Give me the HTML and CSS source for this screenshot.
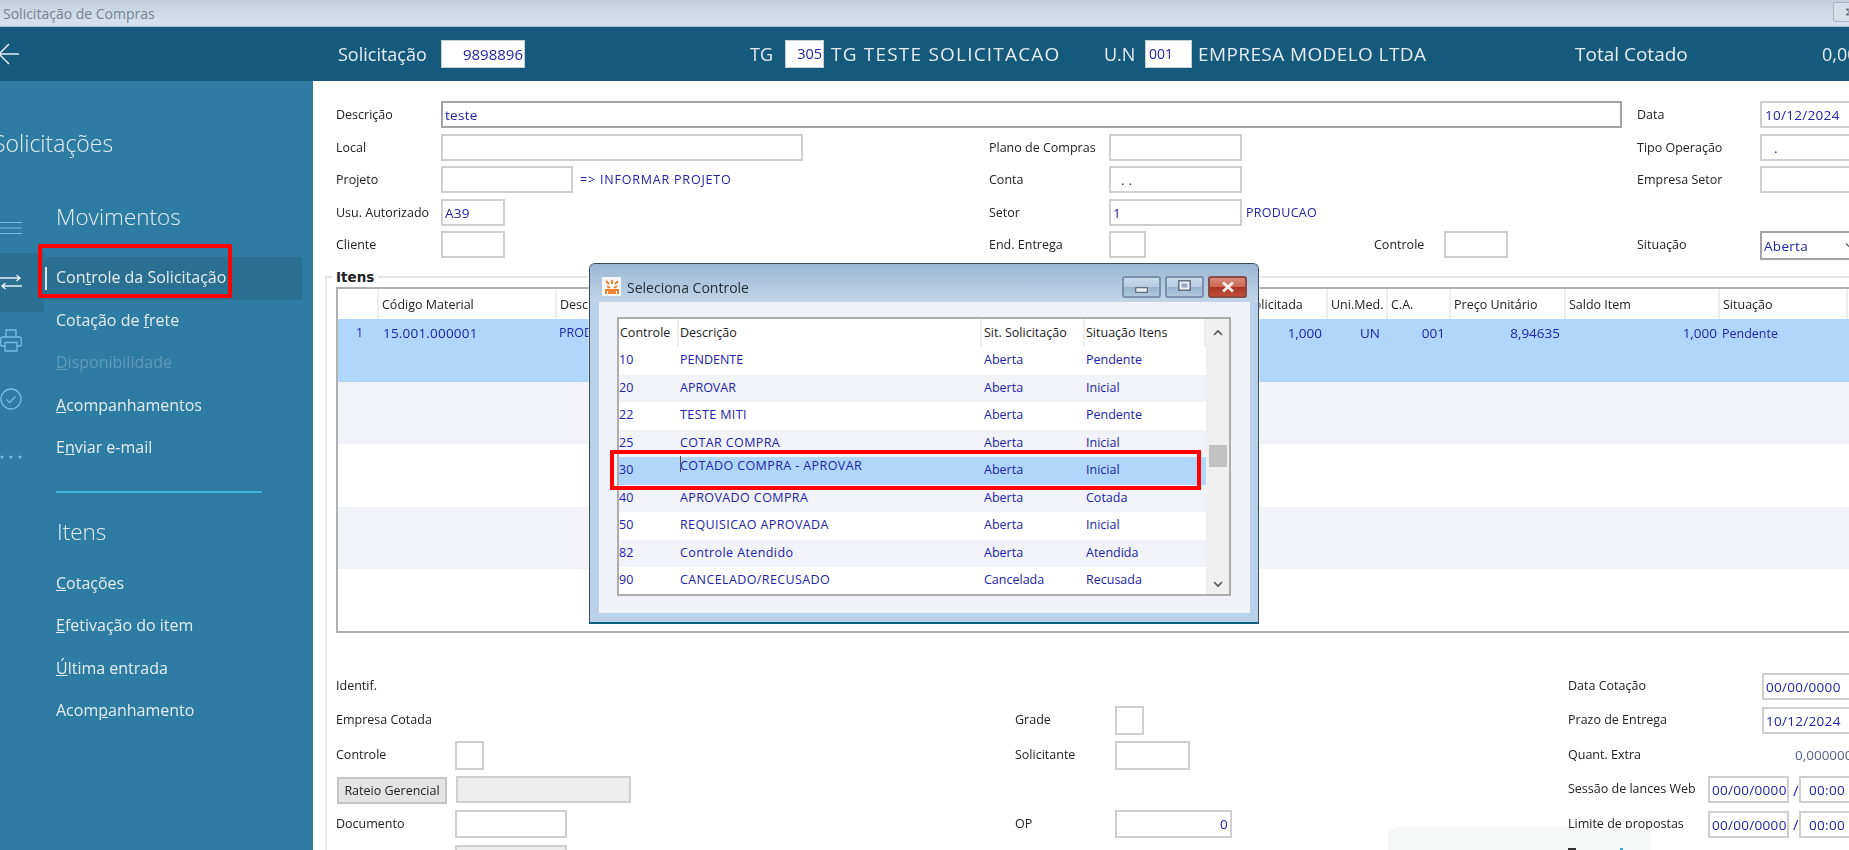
FILE: index.html
```html
<!DOCTYPE html>
<html lang="pt-BR">
<head>
<meta charset="utf-8">
<title>Solicitação de Compras</title>
<link rel="stylesheet" href="styles.css">
</head>
<body>
<div class="app">
  <div class="titlebar">
    <span class="titlebar-text">Solicitação de Compras</span>
    <span class="titlebar-btn">
      <svg width="14" height="14" viewBox="0 0 14 14"><path d="M3 3h9M3 3l5 4-5 4h9" fill="none" stroke="#556" stroke-width="1.4"/></svg>
    </span>
  </div>
  <header class="topbar">
    <svg class="back" width="20" height="30" viewBox="0 0 20 30"><path d="M19 15H0M9 5L-1 15L9 25" fill="none" stroke="#e4edf2" stroke-width="1.5"/></svg>
    <span class="tb-label tb-sol">Solicitação</span>
    <span class="tb-box tb-box-sol">9898896</span>
    <span class="tb-label tb-tg">TG</span>
    <span class="tb-box tb-box-tg">305</span>
    <span class="tb-label tb-tgname">TG TESTE SOLICITACAO</span>
    <span class="tb-label tb-un">U.N</span>
    <span class="tb-box tb-box-un">001</span>
    <span class="tb-label tb-unname">EMPRESA MODELO LTDA</span>
    <span class="tb-label tb-total">Total Cotado</span>
    <span class="tb-label tb-value">0,00</span>
  </header>
  <div class="body">
    <aside class="sidebar">
      <div class="side-title">Solicitações</div>
      <div class="side-main">
        <div class="rail">
          <div class="rail-cell rail-first">
            <svg width="22" height="14" viewBox="0 0 22 14"><path d="M0 1.500h22M0 7h22M0 12.500h22" stroke="#74bde6" stroke-width="1.200"/></svg>
          </div>
          <div class="rail-cell rail-active">
            <svg width="22" height="16" viewBox="0 0 22 16"><path d="M0 4h20M16.500 1l3.500 3-3.500 3M22 12H2M5.500 9L2 12l3.500 3" fill="none" stroke="#e8f1f6" stroke-width="1.400"/></svg>
          </div>
          <div class="rail-cell">
            <svg width="22" height="23" viewBox="0 0 22 23"><path d="M6 8V1h10v7M5 17H1.500A1 1 0 0 1 .700 16v-6q0-2 2-2h16.600q2 0 2 2v6a1 1 0 0 1-.8 1H17M5 13.500h12V22H5z" fill="none" stroke="#74bde6" stroke-width="1.300"/></svg>
          </div>
          <div class="rail-cell">
            <svg width="22" height="22" viewBox="0 0 22 22"><circle cx="11" cy="11" r="10" fill="none" stroke="#74bde6" stroke-width="1.300"/><path d="M6.500 11.500l3 3 6-6" fill="none" stroke="#74bde6" stroke-width="1.300"/></svg>
          </div>
          <div class="rail-cell">
            <svg width="22" height="4" viewBox="0 0 22 4"><circle cx="2" cy="2" r="1.500" fill="#74bde6"/><circle cx="11" cy="2" r="1.500" fill="#74bde6"/><circle cx="20" cy="2" r="1.500" fill="#74bde6"/></svg>
          </div>
        </div>
        <nav class="nav">
          <div class="nav-heading">Movimentos</div>
          <ul class="nav-list">
            <li class="nav-item nav-active">Con<u>t</u>role da Solicitação</li>
            <li class="nav-item">Cotação de <u>f</u>rete</li>
            <li class="nav-item nav-disabled"><u>D</u>isponibilidade</li>
            <li class="nav-item"><u>A</u>companhamentos</li>
            <li class="nav-item">E<u>n</u>viar e-mail</li>
          </ul>
          <div class="nav-divider"></div>
          <div class="nav-heading nav-heading-2">Itens</div>
          <ul class="nav-list nav-list-2">
            <li class="nav-item"><u>C</u>otações</li>
            <li class="nav-item"><u>E</u>fetivação do item</li>
            <li class="nav-item"><u>Ú</u>ltima entrada</li>
            <li class="nav-item">Acom<u>p</u>anhamento</li>
          </ul>
        </nav>
      </div>
    </aside>
    <main class="main">
      <section class="top-form">
        <label class="lbl">Descrição</label>
        <div class="fld fld-dark span-desc val">teste</div>
        <label class="lbl col6">Data</label>
        <div class="fld fld-open val pad-date">10/12/2024</div>

        <label class="lbl">Local</label>
        <div class="fld w362"></div>
        <label class="lbl">Plano de Compras</label>
        <div class="fld w133"></div>
        <span></span><span></span>
        <label class="lbl">Tipo Operação</label>
        <div class="fld fld-open val pad-dot">.</div>

        <label class="lbl">Projeto</label>
        <div class="cell-inline"><div class="fld w132"></div><span class="link link-wide">=&gt; INFORMAR PROJETO</span></div>
        <label class="lbl">Conta</label>
        <div class="fld w133 val pad-dots">. .</div>
        <span></span><span></span>
        <label class="lbl">Empresa Setor</label>
        <div class="fld fld-open"></div>

        <label class="lbl">Usu. Autorizado</label>
        <div class="fld w64 val">A39</div>
        <label class="lbl">Setor</label>
        <div class="cell-inline"><div class="fld w133 val">1</div><span class="link link-prod">PRODUCAO</span></div>
        <span></span><span></span><span></span><span></span>

        <label class="lbl">Cliente</label>
        <div class="fld w64"></div>
        <label class="lbl">End. Entrega</label>
        <div class="fld w37"></div>
        <label class="lbl">Controle</label>
        <div class="fld w64"></div>
        <label class="lbl">Situação</label>
        <div class="fld fld-dark fld-open fld-select val">Aberta
          <svg width="12" height="8" viewBox="0 0 12 8"><path d="M1 1.500l5 5 5-5" fill="none" stroke="#555" stroke-width="1.200"/></svg>
        </div>
      </section>

      <section class="group">
        <div class="group-title">Itens</div>
        <div class="grid-wrap">
          <table class="items">
            <colgroup>
              <col class="c1"><col class="c2"><col class="c3"><col class="c4"><col class="c5"><col class="c6"><col class="c7"><col class="c8"><col class="c9"><col class="c10">
            </colgroup>
            <thead>
              <tr><th></th><th>Código Material</th><th>Descrição</th><th>Quant. Solicitada</th><th>Uni.Med.</th><th>C.A.</th><th>Preço Unitário</th><th>Saldo Item</th><th>Situação</th><th></th></tr>
            </thead>
            <tbody>
              <tr class="sel"><td class="num-c">1</td><td class="ind">15.001.000001</td><td>PRODUTO</td><td class="r">1,000</td><td class="r r-un">UN</td><td class="r">001</td><td class="r">8,94635</td><td class="r r-saldo">1,000</td><td class="pend">Pendente</td><td></td></tr>
              <tr class="alt"><td colspan="10"></td></tr>
              <tr><td colspan="10"></td></tr>
              <tr class="alt"><td colspan="10"></td></tr>
              <tr><td colspan="10"></td></tr>
            </tbody>
          </table>
        </div>
      </section>

      <section class="bottom-form">
        <div class="bf-col bf-a">
          <div class="bf-row"><label class="lbl">Identif.</label></div>
          <div class="bf-row"><label class="lbl">Empresa Cotada</label></div>
          <div class="bf-row"><label class="lbl lbl-119">Controle</label><div class="fld w29"></div></div>
          <div class="bf-row"><button class="btn" type="button">Rateio Gerencial</button><div class="fld fld-off w175"></div></div>
          <div class="bf-row"><label class="lbl lbl-119">Documento</label><div class="fld w112"></div></div>
          <div class="bf-row"><span class="lbl-119"></span><div class="fld fld-off w112"></div></div>
        </div>
        <div class="bf-col bf-b">
          <div class="bf-row"></div>
          <div class="bf-row"><label class="lbl lbl-100">Grade</label><div class="fld w29"></div></div>
          <div class="bf-row"><label class="lbl lbl-100">Solicitante</label><div class="fld w75"></div></div>
          <div class="bf-row"></div>
          <div class="bf-row"><label class="lbl lbl-100">OP</label><div class="fld w117 val right">0</div></div>
        </div>
        <div class="bf-col bf-c">
          <div class="bf-row"><label class="lbl lbl-194">Data Cotação</label><div class="fld fld-open val">00/00/0000</div></div>
          <div class="bf-row"><label class="lbl lbl-194">Prazo de Entrega</label><div class="fld fld-open val">10/12/2024</div></div>
          <div class="bf-row"><label class="lbl lbl-194">Quant. Extra</label><span class="plain">0,000000</span></div>
          <div class="bf-row"><label class="lbl lbl-140">Sessão de lances Web</label><div class="fld w81 val">00/00/0000</div><span class="slash">/</span><div class="fld fld-open val ctr-time">00:00</div></div>
          <div class="bf-row"><label class="lbl lbl-140">Limite de propostas</label><div class="fld w81 val">00/00/0000</div><span class="slash">/</span><div class="fld fld-open val ctr-time">00:00</div></div>
        </div>
      </section>
    </main>
  </div>

  <div class="mark mark-side"></div>

  <div class="dialog">
    <div class="dlg-head">
      <span class="dlg-icon">
        <svg width="14" height="16" viewBox="0 0 14 16"><path d="M1 2l3 3M7 1v4M13 2l-3 3M2 7l3 2M12 7L9 9M1 15v-4h3v4M6 15v-4h2v4M10 15v-4h3v4" fill="none" stroke="#ef7a22" stroke-width="1.800"/></svg>
      </span>
      <span class="dlg-title">Seleciona Controle</span>
      <span class="win-btns">
        <span class="win-btn"><svg class="glyph-min" width="13" height="6" viewBox="0 0 13 6"><rect x=".7" y=".7" width="11.600" height="4.600" fill="#eef2f6" stroke="#5b6a80" stroke-width="1.200"/></svg></span>
        <span class="win-btn"><svg class="glyph-max" width="13" height="11" viewBox="0 0 13 11"><rect x=".8" y=".8" width="11.400" height="9.400" fill="#eef2f6" stroke="#5b6a80" stroke-width="1.400"/><rect x="3.500" y="3.500" width="6" height="4" fill="#8fa9c6"/></svg></span>
        <span class="win-btn win-close"><svg width="14" height="12" viewBox="0 0 14 12"><path d="M2 1.500l10 9M12 1.500l-10 9" stroke="#f3ecea" stroke-width="3"/></svg></span>
      </span>
    </div>
    <div class="dlg-body">
      <div class="list">
        <div class="list-main">
          <div class="list-row list-head"><span>Controle</span><span>Descrição</span><span>Sit. Solicitação</span><span>Situação Itens</span></div>
          <div class="list-row"><span>10</span><span>PENDENTE</span><span>Aberta</span><span>Pendente</span></div>
          <div class="list-row alt"><span>20</span><span>APROVAR</span><span>Aberta</span><span>Inicial</span></div>
          <div class="list-row"><span>22</span><span class="cap">TESTE MITI</span><span>Aberta</span><span>Pendente</span></div>
          <div class="list-row alt"><span>25</span><span class="cap">COTAR COMPRA</span><span>Aberta</span><span>Inicial</span></div>
          <div class="list-row sel"><span>30</span><span class="cap raised">COTADO COMPRA - APROVAR</span><span>Aberta</span><span>Inicial</span></div>
          <div class="list-row alt"><span>40</span><span class="cap">APROVADO COMPRA</span><span>Aberta</span><span>Cotada</span></div>
          <div class="list-row"><span>50</span><span class="cap">REQUISICAO APROVADA</span><span>Aberta</span><span>Inicial</span></div>
          <div class="list-row alt"><span>82</span><span class="cap">Controle Atendido</span><span>Aberta</span><span>Atendida</span></div>
          <div class="list-row"><span>90</span><span class="cap">CANCELADO/RECUSADO</span><span>Cancelada</span><span>Recusada</span></div>
        </div>
        <div class="scroll">
          <svg width="12" height="8" viewBox="0 0 12 8"><path d="M2 6l4-4 4 4" fill="none" stroke="#555" stroke-width="1.600"/></svg>
          <div class="thumb"></div>
          <svg width="12" height="8" viewBox="0 0 12 8"><path d="M2 2l4 4 4-4" fill="none" stroke="#555" stroke-width="1.600"/></svg>
        </div>
      </div>
      <div class="mark mark-dlg"></div>
    </div>
  </div>

  <div class="toast"></div>
</div>
</body>
</html>
```
FILE: styles.css
```css
* { box-sizing: border-box; }
html, body { margin: 0; padding: 0; height: 100%; overflow: hidden; background: #fff; }
.app {
  position: relative;
  width: 1849px;
  height: 850px;
  overflow: hidden;
  display: flex;
  flex-direction: column;
  font-family: "Open Sans", "Liberation Sans", sans-serif;
  font-size: 12.5px;
  color: #222;
  filter: blur(0.3px);
}

/* title bar */
.titlebar {
  height: 27px;
  flex: none;
  display: flex;
  align-items: center;
  justify-content: space-between;
  padding: 0 0 0 3px;
  background: linear-gradient(#c3d0dc, #d6e4f2);
  border-bottom: 1px solid #a9c0d2;
}
.titlebar-text { color: #75838f; font-size: 14px; }
.titlebar-btn {
  width: 22px; height: 20px; margin-bottom: 3px; margin-right: -6px;
  border: 1px solid #a9b6c2; border-radius: 2px;
  display: flex; align-items: center; padding-left: 10px;
  background: #d5dfe8;
}

/* header */
.topbar {
  height: 54px;
  flex: none;
  display: flex;
  align-items: center;
  background: #155a7c;
  color: #e4edf2;
  font-size: 18px;
  white-space: nowrap;
}
.back { flex: none; width: 20px; }
.tb-label { flex: none; }
.tb-box {
  height: 28px;
  background: #fff;
  border: 1px solid #c4d0d8;
  color: #2222aa;
  font-size: 14.500px;
  line-height: 26px;
  text-align: right;
  padding-right: 1px;
  flex: none;
}
.tb-sol { margin-left: 318px; width: 103px; }
.tb-box-sol { width: 84px; font-size: 15px; }
.tb-tg { margin-left: 225px; width: 35px; }
.tb-box-tg { width: 39px; }
.tb-tgname { margin-left: 7px; width: 273px; font-size: 19px; letter-spacing: 1.200px; }
.tb-un { width: 41px; }
.tb-box-un { width: 47px; text-align: left; padding: 0 0 0 3px; font-size: 14px; }
.tb-unname { margin-left: 6px; width: 377px; font-size: 19px; letter-spacing: .4px; }
.tb-total { width: 247px; font-size: 19px; }

/* layout */
.body { flex: 1; display: flex; min-height: 0; }

/* sidebar */
.sidebar {
  width: 313px;
  flex: none;
  background: #2e7ca3;
  color: #e3edf2;
}
.side-title {
  height: 114px;
  padding: 46px 0 0 0;
  margin-left: -7px;
  font-size: 23px;
  line-height: 32px;
  font-weight: 300;
}
.side-main { display: flex; }
.rail { width: 44px; flex: none; }
.rail-cell {
  height: 58.300px;
  display: flex;
  align-items: center;
}
.rail-cell svg { flex: none; }
.rail-first { padding-top: 7px; }
.rail-active { background: #2b6f92; }
.nav { width: 258px; flex: none; }
.nav-heading {
  height: 44px;
  padding-left: 12px;
  font-size: 22.500px;
  line-height: 43px;
  font-weight: 300;
}
.nav-heading-2 { padding-left: 13px; }
.nav-list { list-style: none; margin: 18px 0 0; padding: 0; }
.nav-list-2 { margin-top: 9px; }
.nav-item {
  position: relative;
  height: 42.500px;
  padding-left: 12px;
  font-size: 16px;
  line-height: 41px;
  white-space: nowrap;
}
.nav-active { background: #2b6f92; }
.nav-active::before {
  content: "";
  position: absolute;
  left: 1px; top: 10px;
  width: 2px; height: 23px;
  background: #dfeaf0;
}
.nav-disabled { color: #5f9ab8; }
.nav-divider {
  height: 2px;
  margin: 21px 0 17px 12px;
  width: 206px;
  background: #3fb3dc;
}

/* main */
.main {
  flex: 1;
  min-width: 0;
  padding: 20px 0 0 23px;
  position: relative;
  overflow: hidden;
}
.lbl { display: block; line-height: 27px; white-space: nowrap; }
.fld {
  height: 27px;
  border: 2px solid #cfcfcf;
  background: #fff;
  flex: none;
}
.fld-dark { border-color: #a3a3a3; }
.val { color: #2222aa; line-height: 25px; padding-left: 2px; font-size: 13.500px; letter-spacing: .3px; white-space: nowrap; }
.right { text-align: right; padding-right: 2px; }
.fld-open { width: 110px; }
.w362 { width: 362px; }
.w133 { width: 133px; }
.w132 { width: 132px; }
.w64 { width: 64px; }
.w37 { width: 37px; }
.w29 { width: 29px; height: 29px; }
.w175 { width: 175px; }
.w112 { width: 112px; height: 28px; }
.w75 { width: 75px; height: 29px; }
.w117 { width: 117px; height: 28px; }
.w81 { width: 81px; }
.fld-off { background: #ededed; }
.span-desc { grid-column: 2 / span 4; width: 1181px; }
.pad-date { padding-left: 3px; }
.pad-dot { padding-left: 12px; }
.pad-dots { padding-left: 10px; }
.link { color: #2222aa; line-height: 27px; margin-left: 7px; white-space: nowrap; }
.link-wide { letter-spacing: .8px; }
.link-prod { margin-left: 4px; letter-spacing: .3px; }

.top-form {
  display: grid;
  grid-template-columns: 105px 548px 120px 265px 70px 193px 123px 110px;
  grid-auto-rows: 32.500px;
  height: 175px;
}
.col6 { grid-column: 7; }
.cell-inline { display: flex; }
.fld-select {
  height: 29px;
  display: flex;
  align-items: center;
  padding-right: 11px;
  line-height: normal;
}
.fld-select svg { flex: none; margin-left: auto; }

/* group */
.group {
  position: relative;
  margin: 0 0 0 -11px;
  padding: 11px 0 0 11px;
  height: 357px;
}
.main::before {
  content: "";
  position: absolute;
  left: 12px; top: 195px; bottom: 0;
  border-left: 2px solid #ececec;
}
.group::before {
  content: "";
  position: absolute;
  left: 0; right: 0; top: 0;
  border-top: 2px solid #e6e6e6;
}
.group-title {
  position: absolute;
  left: 7px; top: -8px;
  padding: 0 4px;
  background: #fff;
  font-weight: 700;
  font-size: 13.500px;
  font-family: "DejaVu Sans", sans-serif;
  line-height: 18px;
}
.grid-wrap {
  width: 1540px;
  height: 346px;
  border: 2px solid #b0b0b0;
  border-right: 0;
  overflow: hidden;
  position: relative;
}
.items {
  border-collapse: collapse;
  table-layout: fixed;
  width: 1539px;
  color: #2222aa;
}
.c1 { width: 40px; }
.c2 { width: 178px; }
.c3 { width: 644px; }
.c4 { width: 127px; }
.c5 { width: 60px; }
.c6 { width: 63px; }
.c7 { width: 115px; }
.c8 { width: 154px; }
.c9 { width: 128px; }
.c10 { width: 30px; }
.items th {
  height: 30px;
  padding: 0 3px;
  font-weight: 400;
  color: #222;
  text-align: left;
  white-space: nowrap;
  border-right: 2px solid #eeeeee;
}
.items td { padding: 5px 3px 0; vertical-align: top; height: 62.500px; white-space: nowrap; }
.items .sel td { background: #b0d7fb; }
.items .alt td { background: #f2f3f8; }
.items .r { text-align: right; padding-right: 5px; font-size: 13.500px; }
.items .r-saldo { padding-right: 2px; }
.items .r-un { padding-right: 7px; }
.items .num-c { text-align: center; padding-left: 6px; padding-right: 3px; }
.items .ind { padding-left: 5px; font-size: 13.500px; letter-spacing: .2px; }
.items .pend { padding-top: 6px; }

/* bottom form */
.bottom-form {
  display: flex;
  padding-top: 36px;
}
.bf-col { display: flex; flex-direction: column; flex: none; }
.bf-a { width: 679px; }
.bf-b { width: 553px; }
.bf-c { width: 300px; }
.bf-row { display: flex; flex: none; height: 34.500px; align-items: center; }
.bf-row .lbl { margin-top: -2px; }
.lbl-119 { width: 119px; flex: none; }
.lbl-100 { width: 100px; flex: none; }
.lbl-194 { width: 194px; flex: none; }
.lbl-140 { width: 140px; flex: none; }
.btn {
  width: 110px;
  height: 27px;
  margin: 2px 9px 0 1px;
  padding: 0;
  border: 2px solid #c4c4c4;
  background: #e4e4e4;
  font: inherit;
  color: #222;
}
.plain { color: #555f88; margin-left: 33px; white-space: nowrap; font-size: 13.500px; }
.slash { width: 6px; margin-left: 4px; color: #2222aa; flex: none; font-size: 15px; }
.ctr-time { padding-left: 8px; }

/* red highlight marks */
.mark { position: absolute; border: 4px solid #f00; pointer-events: none; }
.mark-side { left: 38px; top: 244px; width: 194px; height: 54px; border-radius: 2px; }
.mark-dlg { left: 11px; top: 148px; width: 591px; height: 40px; }

/* dialog */
.dialog {
  position: absolute;
  left: 589px; top: 263px;
  width: 670px; height: 361px;
  border: 1px solid #3c4a55;
  border-bottom: 2px solid #0f5f78;
  border-radius: 6px 6px 0 0;
  background: #b9d1ea;
  display: flex;
  flex-direction: column;
  box-shadow: 0 0 0 1px rgba(255,255,255,.4);
}
.dlg-head {
  height: 38px;
  flex: none;
  display: flex;
  align-items: center;
  padding: 0 11px 0 12px;
  border-radius: 5px 5px 0 0;
  background: linear-gradient(#9cb8d3, #c1d5e9);
}
.dlg-icon {
  width: 19px; height: 19px;
  background: #f4f7fa;
  display: flex; align-items: center; justify-content: center;
  margin-top: 7px;
}
.dlg-title { margin-left: 6px; margin-top: 8px; font-size: 14px; color: #1f2a33; }
.win-btns { margin-left: auto; display: flex; gap: 4px; margin-top: 7px; }
.win-btn {
  width: 39px; height: 22px;
  display: flex; align-items: center; justify-content: center;
  border: 2px solid #7a92ad;
  border-radius: 3px;
  background: linear-gradient(#c9dbec 0, #b6cde2 50%, #97b3ce 51%, #b2c9de 100%);
}
.glyph-min { transform: translateY(3px); }
.glyph-max { transform: translateY(-1px); }
.win-close {
  background: linear-gradient(#d9897b 0, #cb6653 50%, #ad3423 51%, #bf4d3a 100%);
  border-color: #8c4a46;
}
.dlg-body {
  position: relative;
  flex: 1;
  margin: 0 8px 9px 9px;
  background: #eff2f8;
  padding: 15px 18px 0;
}
.list {
  display: flex;
  height: 279px;
  width: 614px;
  border: 2px solid #adadad;
  background: #fff;
}
.list-main { width: 587px; flex: none; color: #2222aa; }
.list-row {
  display: grid;
  grid-template-columns: 60px 303px 103px 121px;
  height: 27.500px;
  line-height: 25px;
  white-space: nowrap;
}
.list-row span:nth-child(2) { padding-left: 1px; }
.list-row span:nth-child(3) { padding-left: 2px; }
.list-row span:nth-child(4) { padding-left: 1px; }
.list-row .cap { letter-spacing: .4px; }
.list-head { color: #222; height: 28px; line-height: 28px; }
.list-head span { border-right: 2px solid #eeeeee; }
.list-head span:first-child { padding-left: 1px; }
.list-row.alt { background: #f2f3f8; }
.list-row.sel { background: #b0d7fb; }
.raised { position: relative; top: -4px; }
.raised::before {
  content: "";
  position: absolute;
  left: 1px; top: 3px;
  width: 1px; height: 16px;
  background: #555;
}
.scroll {
  flex: 1;
  background: #f0f0f0;
  display: flex;
  flex-direction: column;
  align-items: center;
  padding-top: 10px;
  position: relative;
}
.thumb {
  position: absolute;
  left: 3px; right: 2px; top: 126px;
  height: 22px;
  background: #c1c1c1;
}
.scroll svg:last-child { margin-top: auto; margin-bottom: 6px; }

/* cut-off notification at the bottom edge */
.toast {
  position: absolute;
  left: 1389px; top: 828px;
  width: 261px; height: 40px;
  background: #f6f7f7;
  border-radius: 8px;
  box-shadow: 0 0 3px rgba(0,0,0,.08);
}
.toast::before {
  content: "";
  position: absolute;
  left: 179px; top: 20px;
  width: 8px; height: 3px;
  background: #333;
}
.toast::after {
  content: "";
  position: absolute;
  left: 231px; top: 20px;
  width: 3px; height: 3px;
  background: #39a5e0;
}
```
